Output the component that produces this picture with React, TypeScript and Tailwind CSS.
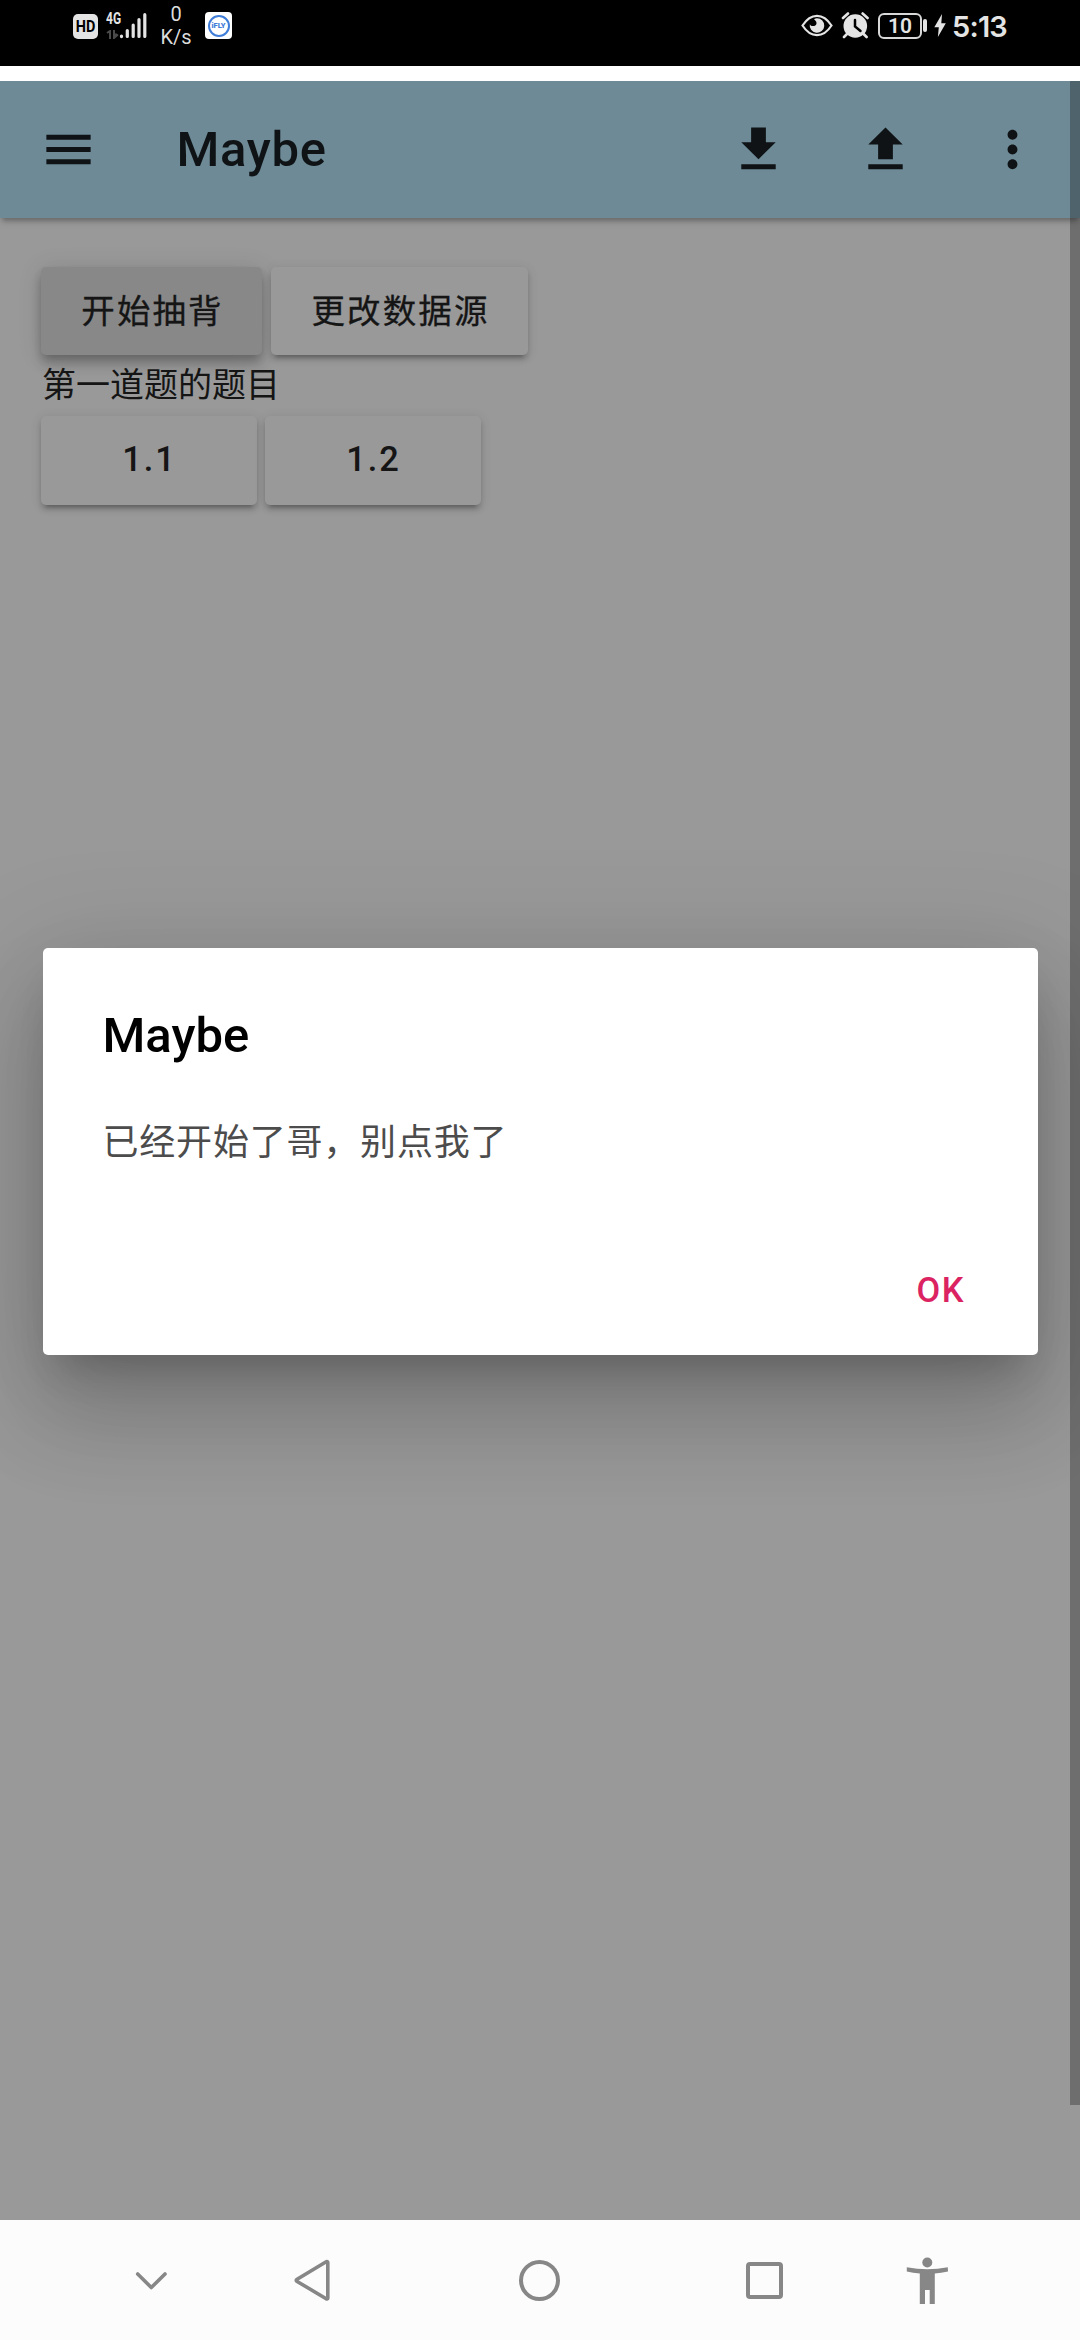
import React from "react";

function StatusBar() {
  return (
    <div className="flex h-[66px] w-full items-start bg-black text-[#e4e4e4]">
      <div className="mt-[14px] ml-[73px] flex h-[25px] w-[25px] items-center justify-center rounded-[5px] bg-[#e4e4e4] font-['Roboto'] text-[17px] leading-none font-bold text-black">
        <span className="scale-x-85">HD</span>
      </div>
      <div className="mt-[12px] ml-[8px] flex w-[42px]">
        <div className="w-[13px]">
          <div className="origin-left scale-x-75 font-['Roboto'] text-[16px] leading-[14px] font-bold">4G</div>
          <svg className="mt-[4px] block" width="13" height="9" viewBox="0 0 13 9" fill="none" stroke="#4a4a4a" strokeWidth="2">
            <path d="M1 3l3-2v8M8 0v8l4-3.500M8 4.500h3" />
          </svg>
        </div>
        <svg className="block" width="29" height="28" viewBox="0 0 29 28" fill="none" stroke="#e4e4e4" strokeWidth="3.200" strokeLinecap="round">
          <path d="M2.500 24v.6M8.300 18.500v6M14.200 13v11.500M20 7.500v17M25.800 2.700v21.800" />
        </svg>
      </div>
      <div className="mt-[3px] ml-[11px] w-[34px] text-center font-['Roboto'] text-[20px] leading-[23px] text-[#dcdcdc]">
        <div>0</div>
        <div>K/s</div>
      </div>
      <div className="mt-[12px] ml-[12px] flex h-[27px] w-[27px] items-center justify-center rounded-[4px] bg-white">
        <div className="flex h-[22px] w-[22px] items-center justify-center rounded-full border-2 border-[#3f7dd8] font-['Roboto'] text-[7.500px] leading-none font-black text-[#3f7dd8]">
          iFLY
        </div>
      </div>
      <svg className="mt-[14px] ml-[569px] block" width="32" height="23" viewBox="0 0 32 23">
        <path d="M1.500 11.500C6 4.500 11 1.800 16 1.800s10 2.700 14.500 9.700C26 18.500 21 21.200 16 21.200S6 18.500 1.500 11.500z" fill="none" stroke="#e4e4e4" strokeWidth="2.200" />
        <path d="M16 4.200a7.300 7.300 0 1 1-7.200 6c1 2.600 6.200 2.700 6.700-.8.300-2.200-1.500-3-2.500-4.200 1-.6 2-1 3-1z" fill="#e4e4e4" />
      </svg>
      <svg className="mt-[12px] ml-[8px] block" width="29" height="27" viewBox="0 0 29 27">
        <circle cx="14.300" cy="14" r="11.800" fill="#e4e4e4" />
        <path d="M2 6l5-4.500M26.600 6l-5-4.500M6 22l-3 3M22.600 22l3 3" stroke="#e4e4e4" strokeWidth="2.600" strokeLinecap="round" />
        <path d="M14 8v6.500l5.500 4.500" fill="none" stroke="#000" strokeWidth="2.500" strokeLinecap="round" />
      </svg>
      <div className="mt-[13px] ml-[8px] flex h-[26px] w-[44px] items-center justify-center rounded-[6px] border-[2px] border-[#d8d8d8] font-['Roboto'] text-[21px] leading-none font-semibold">
        10
      </div>
      <div className="mt-[19px] ml-[1px] h-[13px] w-[4px] rounded-[2px] bg-[#e4e4e4]" />
      <svg className="mt-[14px] ml-[7px] block" width="12" height="23" viewBox="0 0 12 23" fill="#e4e4e4">
        <path d="M8 0L.3 13.200h4.500L3.900 23 11.800 9.200H7.300z" />
      </svg>
      <div className="mt-[13px] ml-[6px] font-['Inter'] text-[29px] leading-[28px] font-semibold tracking-[-0.8px]">5:13</div>
    </div>
  );
}

function ToolIcon({ d }: { d: string }) {
  return (
    <svg className="block" width="59" height="59" viewBox="0 0 24 24" fill="#0f1315">
      <path d={d} />
    </svg>
  );
}

function AppBar() {
  return (
    <header className="relative flex h-[137px] items-center bg-[#6d8a96] pl-[39px] text-[#0f1315] shadow-[0_5px_5px_-2px_rgba(0,0,0,0.28),0_1px_12px_0_rgba(0,0,0,0.08)]">
      <ToolIcon d="M3 18h18v-2H3v2zm0-5h18v-2H3v2zm0-7v2h18V6H3z" />
      <h1 className="mb-px ml-[78.500px] flex-1 font-['Roboto'] text-[49px] leading-none font-medium tracking-[0.700px]">Maybe</h1>
      <div className="mr-[38px] flex gap-[68px]">
        <ToolIcon d="M19 9h-4V3H9v6H5l7 7 7-7zM5 18v2h14v-2H5z" />
        <ToolIcon d="M9 16h6v-6h4l-7-7-7 7h4v6zm-4 2h14v2H5v-2z" />
        <ToolIcon d="M12 8c1.100 0 2-.9 2-2s-.9-2-2-2-2 .9-2 2 .9 2 2 2zm0 2c-1.100 0-2 .9-2 2s.9 2 2 2 2-.9 2-2-.9-2-2-2zm0 6c-1.100 0-2 .9-2 2s.9 2 2 2 2-.9 2-2-.9-2-2-2z" />
      </div>
    </header>
  );
}

function Page() {
  return (
    <main className="px-[41px] pt-[49px] text-[#151515]">
      <div className="flex gap-[9px] font-['Noto_Sans_CJK_SC',sans-serif] text-[33.500px] tracking-[2.100px] [-webkit-text-stroke:0.3px_#151515]">
        <button className="relative flex h-[88px] w-[221px] items-center justify-center rounded-[5px] bg-[#888] pb-[4px] pl-[2px] shadow-[0_5px_10px_-2px_rgba(0,0,0,0.2),0_10px_12px_0_rgba(0,0,0,0.14),0_2px_25px_0_rgba(0,0,0,0.12)]">
          开始抽背
        </button>
        <button className="relative flex h-[88px] w-[257px] items-center justify-center rounded-[5px] bg-[#999] pb-[4px] pl-[2px] shadow-[0_7px_3px_-5px_rgba(0,0,0,0.2),0_5px_5px_0_rgba(0,0,0,0.14),0_2px_12px_0_rgba(0,0,0,0.12)]">
          更改数据源
        </button>
      </div>
      <p className="relative mt-[5px] h-[56px] pl-px font-['Noto_Sans_CJK_SC',sans-serif] text-[34px] leading-[46px]">第一道题的题目</p>
      <div className="flex gap-[8px] font-['Roboto'] text-[34.400px] font-medium tracking-[2px]">
        <button className="flex h-[89px] w-[216px] items-center justify-center rounded-[5px] bg-[#999] pb-[2px] pl-px shadow-[0_7px_3px_-5px_rgba(0,0,0,0.2),0_5px_5px_0_rgba(0,0,0,0.14),0_2px_12px_0_rgba(0,0,0,0.12)]">
          1.1
        </button>
        <button className="flex h-[89px] w-[216px] items-center justify-center rounded-[5px] bg-[#999] pb-[2px] pl-px shadow-[0_7px_3px_-5px_rgba(0,0,0,0.2),0_5px_5px_0_rgba(0,0,0,0.14),0_2px_12px_0_rgba(0,0,0,0.12)]">
          1.2
        </button>
      </div>
    </main>
  );
}

function Dialog() {
  return (
    <div
      role="dialog"
      className="absolute top-[867px] left-[42.500px] flex h-[407px] w-[995.500px] flex-col rounded-[5px] bg-white px-[60px] shadow-[0_27px_37px_-17px_rgba(0,0,0,0.2),0_59px_93px_7px_rgba(0,0,0,0.14),0_22px_113px_20px_rgba(0,0,0,0.12)]"
    >
      <h2 className="mt-[59px] font-['Roboto'] text-[49px] leading-[58px] font-medium text-black">Maybe</h2>
      <p className="mt-[47px] font-['Noto_Sans_CJK_SC',sans-serif] text-[36px] leading-[54px] tracking-[0.800px] text-[#4c4c4c]">
        已经开始了哥，别点我了
      </p>
      <button className="mt-[102px] mr-[13px] self-end font-['Roboto'] text-[34.400px] leading-[44px] font-medium tracking-[1.500px] text-[#dc2362]">OK</button>
    </div>
  );
}

function NavBar() {
  return (
    <nav className="flex h-[120px] items-center bg-[#fcfcfc] text-[#878787]">
      <svg className="mt-px ml-[135px] block" width="33" height="20" viewBox="0 0 33 20" fill="none" stroke="currentColor" strokeWidth="3.600" strokeLinecap="round" strokeLinejoin="round">
        <path d="M2.700 3l13.600 13.500L30 3" />
      </svg>
      <svg className="ml-[125px] block" width="38" height="42" viewBox="0 0 38 42" fill="none" stroke="currentColor" strokeWidth="3.600" strokeLinejoin="round">
        <path d="M34.800 3.500v35.500a1 1 0 0 1-1.600.7L3.700 22.200a1 1 0 0 1 0-1.700L33.200 2.700a1 1 0 0 1 1.600.8z" />
      </svg>
      <div className="ml-[188px] h-[41px] w-[41px] rounded-full border-[4px] border-current" />
      <div className="mt-px ml-[186px] h-[37px] w-[37px] rounded-[4px] border-[4px] border-current" />
      <svg className="mt-[2px] ml-[123px] block" width="42" height="48" viewBox="0 0 42 48" fill="currentColor">
        <circle cx="21.300" cy="5.500" r="5" />
        <path d="M.8 10.200Q21.300 14.500 41.800 10.200L42 14.500Q35 16 28.800 16.500V47H23.700V33H19V47H13.800V16.500Q7 16 .8 14.500z" />
      </svg>
    </nav>
  );
}

export default function App() {
  return (
    <div className="flex h-[2340px] w-[1080px] flex-col overflow-hidden bg-white">
      <StatusBar />
      <div className="relative mt-[15px] h-[2139px] overflow-hidden bg-[#999]">
        <AppBar />
        <Page />
        <Dialog />
        <div className="absolute top-0 right-0 h-[2024px] w-[10px] bg-black/28" />
      </div>
      <NavBar />
    </div>
  );
}
